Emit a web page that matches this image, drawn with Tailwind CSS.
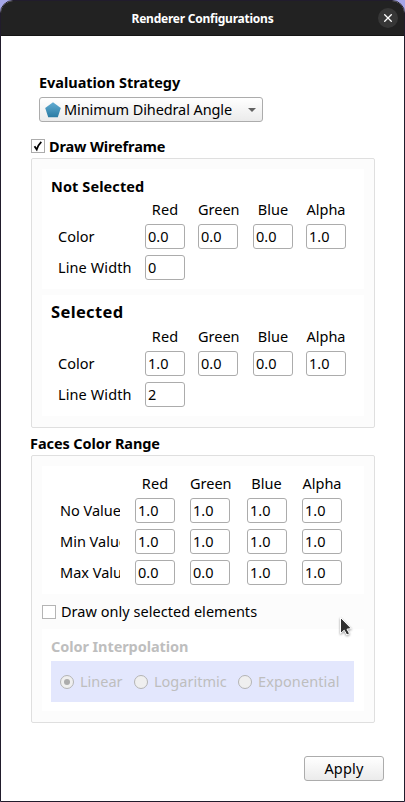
<!DOCTYPE html>
<html lang="en">
<head>
<meta charset="utf-8">
<title>Renderer Configurations</title>
<script src="https://cdn.jsdelivr.net/npm/@tailwindcss/browser@4"></script>
</head>
<body class="w-[405px] h-[802px] overflow-hidden bg-[#a5a6e8] font-['Noto_Sans',sans-serif] text-[14.5px] leading-5 text-black">
<div class="relative flex h-[802px] w-[405px] flex-col overflow-hidden rounded-t-[13px] border border-[#211c2c] bg-white">
  <header class="-mx-px -mt-px flex h-9 shrink-0 items-center justify-end border-t border-b border-t-[#353238] border-b-[#151515] bg-[#222222] pr-[7px]">
    <h1 class="flex-1 pt-px pl-[27px] text-center text-[12px] font-bold tracking-[-0.24px] text-white">Renderer Configurations</h1>
    <button class="flex size-5 items-center justify-center rounded-full bg-[#373737]" aria-label="Close">
      <svg class="size-2" viewBox="0 0 8 8" fill="none" stroke="#fff" stroke-width="1.3"><path d="M.3.3l7.4 7.4M7.7.3L.3 7.7"/></svg>
    </button>
  </header>

  <main class="flex flex-col pl-[30px]">
    <h2 class="mt-9 ml-2 font-bold tracking-[-0.04px]">Evaluation Strategy</h2>
    <div class="mt-[5px] ml-2 flex h-[25px] w-[224px] items-center rounded-[3px] border border-[#acacac] bg-linear-to-b from-white to-[#ebebeb] pl-[5px]">
      <svg class="h-4 w-4" viewBox="0 0 16 16"><defs><linearGradient id="pent" x2="0" y2="1"><stop stop-color="#62acd2"/><stop offset="1" stop-color="#2a7ba3"/></linearGradient></defs><path d="M8 .3L15.8 6l-3 9.3H3.200L.2 6z" fill="url(#pent)"/></svg>
      <span class="ml-[3px] pb-[2px] whitespace-nowrap tracking-[-0.1px]">Minimum Dihedral Angle</span>
      <svg class="mr-[6px] ml-auto h-1 w-2" viewBox="0 0 8 4"><path d="M0 0h8L4 4z" fill="#626262"/></svg>
    </div>

    <div class="mt-[14px] flex h-5 items-center">
      <div class="flex size-[14px] items-center justify-center border border-[#acacac] bg-white">
        <svg class="size-3" viewBox="0 0 12 12" fill="none" stroke="#000" stroke-width="1.8"><path d="M2.500 6.200L4.700 9.500Q6 5 9.300 1.800"/></svg>
      </div>
      <span class="ml-1 font-bold tracking-[-0.14px]">Draw Wireframe</span>
    </div>

    <section class="mt-[2px] flex h-[270px] w-[344px] flex-col gap-[6px] rounded-[2px] border border-[#dfdfdf] bg-[#fcfcfc] px-[10px] py-[10px]">
      <div class="h-[120px] bg-white pt-[7px] pl-[9px]">
        <h3 class="font-bold tracking-[0.1px]">Not Selected</h3>
        <div class="grid grid-cols-[94px_53px_55px_53px_40px] pt-[3px]">
          <span></span><span class="w-10 text-center tracking-[0.1px]">Red</span><span class="w-10 text-center">Green</span><span class="w-10 text-center">Blue</span><span class="w-10 text-center">Alpha</span>
        </div>
        <div class="mt-[5px] grid grid-cols-[94px_53px_55px_53px_40px] gap-y-[6px]">
          <span class="pt-[2px] pl-[7px]">Color</span>
          <input class="h-[25px] w-10 rounded-[3px] border border-[#acacac] bg-white pb-[2px] pl-[2px]" value="0.0">
          <input class="h-[25px] w-10 rounded-[3px] border border-[#acacac] bg-white pb-[2px] pl-[2px]" value="0.0">
          <input class="h-[25px] w-10 rounded-[3px] border border-[#acacac] bg-white pb-[2px] pl-[2px]" value="0.0">
          <input class="h-[25px] w-10 rounded-[3px] border border-[#acacac] bg-white pb-[2px] pl-[2px]" value="1.0">
          <span class="pt-[2px] pl-[7px] tracking-[0.1px]">Line Width</span>
          <input class="h-[25px] w-10 rounded-[3px] border border-[#acacac] bg-white pb-[2px] pl-[2px]" value="0">
        </div>
      </div>
      <div class="h-[121px] bg-white pt-[7px] pl-[9px]">
        <h3 class="text-[16.5px] font-bold tracking-[0.35px]">Selected</h3>
        <div class="grid grid-cols-[94px_53px_55px_53px_40px] pt-[4px]">
          <span></span><span class="w-10 text-center tracking-[0.1px]">Red</span><span class="w-10 text-center">Green</span><span class="w-10 text-center">Blue</span><span class="w-10 text-center">Alpha</span>
        </div>
        <div class="mt-[5px] grid grid-cols-[94px_53px_55px_53px_40px] gap-y-[6px]">
          <span class="pt-[2px] pl-[7px]">Color</span>
          <input class="h-[25px] w-10 rounded-[3px] border border-[#acacac] bg-white pb-[2px] pl-[2px]" value="1.0">
          <input class="h-[25px] w-10 rounded-[3px] border border-[#acacac] bg-white pb-[2px] pl-[2px]" value="0.0">
          <input class="h-[25px] w-10 rounded-[3px] border border-[#acacac] bg-white pb-[2px] pl-[2px]" value="0.0">
          <input class="h-[25px] w-10 rounded-[3px] border border-[#acacac] bg-white pb-[2px] pl-[2px]" value="1.0">
          <span class="pt-[2px] pl-[7px] tracking-[0.1px]">Line Width</span>
          <input class="h-[25px] w-10 rounded-[3px] border border-[#acacac] bg-white pb-[2px] pl-[2px]" value="2">
        </div>
      </div>
    </section>

    <h2 class="mt-[5px] -ml-px font-bold tracking-[-0.08px]">Faces Color Range</h2>
    <section class="mt-[2px] flex h-[268px] w-[344px] flex-col rounded-[2px] border border-[#dfdfdf] bg-[#fcfcfc] px-[10px] py-[10px]">
      <div class="h-[128px] shrink-0 bg-white pt-[7px] pl-[18px]">
        <div class="grid grid-cols-[75px_55px_57px_55px_40px]">
          <span></span><span class="w-10 text-center tracking-[0.1px]">Red</span><span class="w-[41px] text-center">Green</span><span class="w-[39px] text-center">Blue</span><span class="w-10 text-center">Alpha</span>
        </div>
        <div class="mt-[5px] grid grid-cols-[75px_55px_57px_55px_40px] gap-y-[6px]">
          <span class="mt-[2px] h-5 w-[60px] overflow-hidden whitespace-nowrap">No Value</span>
          <input class="h-[25px] w-10 rounded-[3px] border border-[#acacac] bg-white pb-[2px] pl-[2px]" value="1.0">
          <input class="h-[25px] w-10 rounded-[3px] border border-[#acacac] bg-white pb-[2px] pl-[2px]" value="1.0">
          <input class="h-[25px] w-10 rounded-[3px] border border-[#acacac] bg-white pb-[2px] pl-[2px]" value="1.0">
          <input class="h-[25px] w-10 rounded-[3px] border border-[#acacac] bg-white pb-[2px] pl-[2px]" value="1.0">
          <span class="mt-[2px] h-5 w-[60px] overflow-hidden whitespace-nowrap">Min Value</span>
          <input class="h-[25px] w-10 rounded-[3px] border border-[#acacac] bg-white pb-[2px] pl-[2px]" value="1.0">
          <input class="h-[25px] w-10 rounded-[3px] border border-[#acacac] bg-white pb-[2px] pl-[2px]" value="1.0">
          <input class="h-[25px] w-10 rounded-[3px] border border-[#acacac] bg-white pb-[2px] pl-[2px]" value="1.0">
          <input class="h-[25px] w-10 rounded-[3px] border border-[#acacac] bg-white pb-[2px] pl-[2px]" value="1.0">
          <span class="mt-[2px] h-5 w-[60px] overflow-hidden whitespace-nowrap">Max Value</span>
          <input class="h-[25px] w-10 rounded-[3px] border border-[#acacac] bg-white pb-[2px] pl-[2px]" value="0.0">
          <input class="h-[25px] w-10 rounded-[3px] border border-[#acacac] bg-white pb-[2px] pl-[2px]" value="0.0">
          <input class="h-[25px] w-10 rounded-[3px] border border-[#acacac] bg-white pb-[2px] pl-[2px]" value="1.0">
          <input class="h-[25px] w-10 rounded-[3px] border border-[#acacac] bg-white pb-[2px] pl-[2px]" value="1.0">
        </div>
      </div>
      <div class="flex h-[35px] shrink-0 items-center">
        <div class="size-[14px] border border-[#b4b4b4] bg-white"></div>
        <span class="ml-[5px] pb-[2px] tracking-[0.03px]">Draw only selected elements</span>
      </div>
      <div class="h-[82px] shrink-0 bg-white pt-[7px] pl-[9px] text-[#bebebe]">
        <h3 class="font-bold tracking-[-0.08px]">Color Interpolation</h3>
        <div class="mt-[5px] flex h-[41px] w-[303px] items-center bg-[#e3e7fd] pl-[9px]">
          <span class="flex size-[14px] items-center justify-center rounded-full border border-[#b4b4b4] bg-[#efefef]"><span class="size-[6px] rounded-full bg-[#acacac]"></span></span>
          <span class="ml-[6px] w-[54px] pb-[2px]">Linear</span>
          <span class="size-[14px] rounded-full border border-[#b4b4b4] bg-[#efefef]"></span>
          <span class="ml-[6px] w-[84px] pb-[2px]">Logaritmic</span>
          <span class="size-[14px] rounded-full border border-[#b4b4b4] bg-[#efefef]"></span>
          <span class="ml-[6px] pb-[2px] tracking-[0.1px]">Exponential</span>
        </div>
      </div>
    </section>
    <button class="mt-[33px] mr-5 h-[25px] w-20 self-end rounded-[3px] border border-[#acacac] bg-linear-to-b from-white to-[#ebebeb] pb-[2px] tracking-[0.2px]">Apply</button>
  </main>
  <svg class="absolute top-[615px] left-[338px] h-6 w-4 drop-shadow-[0_1px_1px_rgba(0,0,0,0.4)]" viewBox="0 0 16 24"><path d="M1.500 1.500v16l3.700-3.300 2.600 4.800 2.700-1.400-2.500-4.400 4.300-.7z" fill="#303030" stroke="#fff" stroke-width="1"/></svg>
</div>
</body>
</html>
